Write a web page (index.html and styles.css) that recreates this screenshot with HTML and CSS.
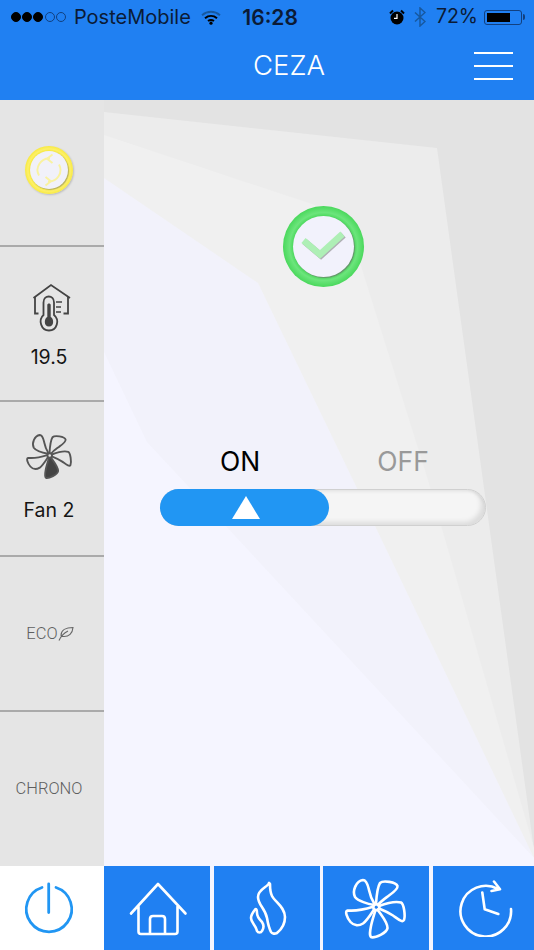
FILE: index.html
```html
<!DOCTYPE html>
<html lang="en">
<head>
<meta charset="utf-8">
<title>CEZA</title>
<link rel="stylesheet" href="styles.css">
</head>
<body>
<svg class="defs" width="0" height="0" aria-hidden="true">
  <symbol id="fan-blades" viewBox="342 876 68 64">
    <path d="M374 905C368 904 358 901 355 897C352 891 356 881 363 880C367 880 368 886 369 890C370 895 372 900 374.500 904"/>
    <path d="M376 904C376.500 896 377.500 887 380 883C383 880 396 882 397.500 886C398 889 394 892 389 895.500C385 898.500 381 901 378 905"/>
    <path d="M379 906C387 903 396 901 401 902.500C404 904 405.500 916 404 920C402.500 923 398 919 393 915.500C389 913 384 910.500 379 908.500"/>
    <path class="blade-four" d="M377.500 909.500C381 915 387.500 922 387.500 928C387 933 375 938 371.500 937.300C369 936 370 931 371 926C372 921 374 915 375.500 910"/>
    <path d="M373 906.800C363 910 353 911 347.500 910.500C344.500 911 347 918 350.500 922C354 926 359 926 363 923.500C367 920.500 371 914 374 909.500"/>
    <circle class="hub" cx="376.300" cy="907.300" r="3"/>
  </symbol>
</svg>
<div class="app">
  <header class="topbar">
    <div class="status">
      <div class="signal">
        <span class="dot on"></span><span class="dot on"></span><span class="dot on"></span><span class="dot"></span><span class="dot"></span>
      </div>
      <span class="carrier">PosteMobile</span>
      <svg class="wifi" viewBox="0 0 20 15" width="20" height="15">
        <path class="wifi-dim" d="M1 5.200C6.300 .6 13.700 .6 19 5.200"/>
        <path class="wifi-on" d="M4 8.300C7.600 5.300 12.400 5.300 16 8.300"/>
        <path class="wifi-on" d="M7 11C8.800 9.700 11.200 9.700 13 11"/>
        <circle class="wifi-dot" cx="10" cy="13.200" r="1.600"/>
      </svg>
      <span class="clock">16:28</span>
      <div class="status-right">
        <svg class="alarm" viewBox="0 0 16 16" width="16" height="16">
          <circle cx="8" cy="9" r="6.500" fill="#000"/>
          <path d="M1 4.500L4 1.500M15 4.500L12 1.500" stroke="#000" stroke-width="2" fill="none"/>
          <path d="M8 5V9.300H5" stroke="#fff" stroke-width="1.200" fill="none"/>
        </svg>
        <svg class="bt" viewBox="0 0 12 20" width="12" height="20">
          <path d="M1 5.500L11 14.500L6 19V1L11 5.500L1 14.500" fill="none" stroke="#17589f" stroke-width="1.500"/>
        </svg>
        <span class="percent">72%</span>
        <div class="battery"><div class="battery-level"></div></div>
      </div>
    </div>
    <div class="nav">
      <h1 class="title">CEZA</h1>
      <div class="burger"><span></span><span></span><span></span></div>
    </div>
  </header>

  <div class="middle">
    <aside class="side">
      <div class="side-item first">
        <div class="sync">
          <div class="sync-face">
            <svg viewBox="0 0 38 38" width="38" height="38">
              <path d="M9 24.500A11.500 11.500 0 0 1 20 7.500M29 13.500A11.500 11.500 0 0 1 18 30.500" fill="none" stroke="#f9f2a0" stroke-width="1.900"/>
              <path d="M22.500 3.500L17 7.700L22.500 12M15.500 26L21 30.300L15.500 34.500" fill="none" stroke="#f9f2a0" stroke-width="1.900"/>
            </svg>
          </div>
        </div>
      </div>
      <div class="side-item temp-item">
        <svg class="thermo" viewBox="27 281 44 51" width="44" height="51">
          <path d="M33.500 297L51 284L70 297" fill="none" stroke="#444" stroke-width="1.800"/>
          <path d="M35 296V312.500H38.500M68 296V312.500H63.500" fill="none" stroke="#444" stroke-width="1.800"/>
          <path d="M43.500 314V301.500C43.500 293.500 54 293.500 54 301.500V314C60 319 57 329.500 49 329.500C41 329.500 38 319 43.500 314Z" fill="#e5e5e5" stroke="#444" stroke-width="1.800"/>
          <path d="M47.300 316V304C47.300 302 50.700 302 50.700 304V316C54 317.500 54.500 325.500 49 325.500C43.500 325.500 44 317.500 47.300 316Z" fill="#444"/>
          <path d="M56 301H62M56 306H61M56 311H61" stroke="#444" stroke-width="1.500"/>
        </svg>
        <span class="side-value temp">19.5</span>
      </div>
      <div class="side-item fan-item">
        <svg class="side-fan" width="51" height="48"><use href="#fan-blades"/></svg>
        <span class="side-value fan-label">Fan 2</span>
      </div>
      <div class="side-item">
        <div class="eco">
          <span class="side-thin">ECO</span>
          <svg viewBox="0 0 16 15" width="16" height="15">
            <path d="M3 9.500C3 4 8 1.500 15 1.500C14.500 7.500 11 11 5 10.500C4 10.500 3 10.500 3 9.500ZM1 14.500C3 10 6 7 10 5" fill="none" stroke="#666" stroke-width="1.100"/>
          </svg>
        </div>
      </div>
      <div class="side-item">
        <span class="side-thin">CHRONO</span>
      </div>
    </aside>

    <main class="panel">
      <svg class="backdrop" viewBox="104 100 430 766" width="430" height="766" aria-hidden="true">
        <path class="bg-a" d="M104 112L437 148L534 850V866H104Z"/>
        <path class="bg-b" d="M104 135L345 215L428 480L534 848V866H104Z"/>
        <path class="bg-c" d="M104 178L258 283L353 480L534 858V866H104Z"/>
        <path class="bg-d" d="M104 352L147 442L187 485L223 523L534 858V866H104Z"/>
      </svg>
      <div class="content">
        <div class="ok">
          <div class="ok-face">
            <svg class="ok-check" viewBox="0 0 61 61" width="61" height="61">
              <path d="M10.500 24.500L27 38.500L49.500 18" fill="none" stroke="#aeefb6" stroke-width="6.500"/>
            </svg>
          </div>
        </div>
        <div class="power-switch">
          <div class="labels">
            <span class="state active">ON</span>
            <span class="state">OFF</span>
          </div>
          <div class="track">
            <div class="fill"><span class="triangle"></span></div>
          </div>
        </div>
      </div>
    </main>
  </div>

  <nav class="tabs">
    <div class="tab tab-power">
      <svg viewBox="19 879 66 58" width="66" height="58">
        <path d="M42 887.500A22.700 22.700 0 1 0 56 887.500M48.700 884V912.500" fill="none" stroke="#2196f3" stroke-width="2.800" stroke-linecap="round"/>
      </svg>
    </div>
    <div class="tab">
      <svg class="tab-icon" viewBox="124 879 66 58" width="66" height="58">
        <path d="M131 913.500L158 884L185.500 913.500M138.500 906.500V931.500Q138.500 934 141 934H175Q177.500 934 177.500 931.500V906.500M150 934V919Q150 916 153 916H162Q165 916 165 919V934"/>
      </svg>
    </div>
    <div class="tab">
      <svg class="tab-icon" viewBox="234 879 66 58" width="66" height="58">
        <path d="M269 883C268 887 258 889 258 897C258 905 265 908 267 918C268 924 269 928 271 932C272 934 275 934 277 933C282 929 285 924 285 917C285 907 275 902 272 896C270 892 270 887 270 884Z"/>
        <path d="M255.500 909C253 912 251 915 251 918C251 923 256 925 257 931C258 933 261 933 262 931C264 928 264 925 262 922C259 919 257 917 257 913C257 911 257 909 255.500 909Z"/>
      </svg>
    </div>
    <div class="tab">
      <svg class="tab-fan" width="68" height="64"><use href="#fan-blades"/></svg>
    </div>
    <div class="tab tab-last">
      <svg class="tab-icon" viewBox="450 879 67 58" width="67" height="58">
        <path d="M498 889A25.300 25.300 0 1 0 511 909M494 881.500L500 889.300L491.500 891M482.300 892.500L484.700 909.300L498.300 914"/>
      </svg>
    </div>
  </nav>
</div>
</body>
</html>
```

FILE: styles.css
```css
* { box-sizing: border-box; }
html, body { margin: 0; padding: 0; }
body { width: 534px; height: 950px; overflow: hidden; font-family: "Inter", "Liberation Sans", sans-serif; background: #fff; }
.defs { position: absolute; }
.app { display: flex; flex-direction: column; width: 534px; height: 950px; }

.topbar { height: 100px; background: #2080f2; flex: none; }
.status { display: flex; align-items: center; height: 34px; padding: 0 10px 0 11px; color: #0b1b36; }
.signal { display: flex; }
.dot { width: 10px; height: 10px; margin-right: 1.200px; border-radius: 50%; border: 1px solid #12407f; }
.dot.on { background: #000; border-color: #000; }
.carrier { font-size: 20px; margin-left: 7px; line-height: 1; }
.wifi { margin-left: 10px; }
.wifi-dim { fill: none; stroke: #17589f; stroke-width: 1.800; }
.wifi-on { fill: none; stroke: #000; stroke-width: 2; }
.wifi-dot { fill: #000; }
.clock { font-size: 21px; font-weight: 600; margin-left: 21.500px; line-height: 1; }
.status-right { display: flex; align-items: center; margin-left: auto; }
.bt { margin-left: 9px; }
.percent { font-size: 19.500px; margin-left: 10px; line-height: 1; }
.battery { position: relative; width: 38px; height: 15px; margin-left: 6px; margin-right: 2px; padding: 2px; border: 1.500px solid #12407f; border-radius: 3px; }
.battery::after { content: ""; position: absolute; right: -4px; top: 3px; width: 2.500px; height: 6px; background: #12407f; border-radius: 0 2px 2px 0; }
.battery-level { width: 72%; height: 100%; background: #000; }

.nav { display: flex; align-items: center; height: 64px; padding-left: 104px; }
.title { flex: 1; margin: 0; text-align: center; color: #fff; font-size: 27.500px; font-weight: 300; line-height: 1; }
.burger { display: flex; flex-direction: column; gap: 11px; width: 60px; padding: 0 21px 0 0; }
.burger span { display: block; width: 39px; height: 2px; background: #fff; }

.middle { display: flex; flex: 1; min-height: 0; }
.side { display: flex; flex-direction: column; width: 104px; flex: none; background: #e5e5e5; }
.side-item { display: flex; flex-direction: column; align-items: center; justify-content: center; height: 155px; padding-right: 6px; border-bottom: 2px solid #aaa; }
.side-item.first { height: 147px; padding-bottom: 6px; }
.side-item:last-child { border-bottom: 0; flex: 1; height: auto; }
.sync { display: flex; align-items: center; justify-content: center; width: 48px; height: 48px; border-radius: 50%; background: radial-gradient(circle, #f6e93c 0, #f6e93c 19px, #fdf06a 21px, #f8ea40 24px); box-shadow: 1px 1px 2px rgba(0,0,0,.18); }
.sync-face { width: 38px; height: 38px; border-radius: 50%; background: #f1f1f9; box-shadow: 1px 1px 1px rgba(120,120,120,.5); }
.sync-face svg { display: block; }
.thermo { display: block; }
.temp-item { padding-top: 4px; }
.side-value { color: #151515; font-size: 19.500px; line-height: 24px; }
.temp { margin-top: 12px; }
.side-fan { display: block; fill: none; stroke: #555; stroke-width: 2.500; --blade-fill: #444; }
.fan-item { padding-bottom: 4px; }
.fan-label { margin-top: 18px; }
.blade-four { fill: var(--blade-fill, none); }
.eco { display: flex; align-items: center; padding-left: 2px; }
.side-thin { color: #5f5f5f; font-family: "Roboto", sans-serif; font-size: 16.500px; font-weight: 300; line-height: 20px; }

.panel { position: relative; flex: 1; min-width: 0; overflow: hidden; background: #e3e3e3; }
.backdrop { position: absolute; left: 0; top: 0; }
.bg-a { fill: #ececec; }
.bg-b { fill: #f0f0f0; }
.bg-c { fill: #f2f2fb; }
.bg-d { fill: #f5f5ff; }
.content { position: relative; padding-top: 106px; }
.ok { display: flex; align-items: center; justify-content: center; width: 81px; height: 81px; margin-left: 178.500px; border-radius: 50%; background: radial-gradient(circle, #4ad85c 0, #4ad85c 30px, #6ce57c 34px, #4ad85c 40.500px); }
.ok-face { width: 61px; height: 61px; border-radius: 50%; background: #f2f2fc; box-shadow: 1px 1px 1px rgba(110,110,110,.65); }
.ok-check { display: block; filter: drop-shadow(1px 1px 0 rgba(120,120,120,.55)); }
.power-switch { width: 326px; margin: 156px 0 0 56px; }
.labels { display: grid; grid-template-columns: 160px 166px; height: 46px; padding-top: 2px; }
.state { color: #999; font-size: 26.500px; line-height: 32px; text-align: center; }
.state.active { color: #000; }
.track { height: 37px; border-radius: 18.500px; background: #f5f5f5; border: 1px solid #d0d0d0; box-shadow: inset -4px -3px 5px rgba(0,0,0,.1), inset 0 2px 3px rgba(0,0,0,.06); }
.fill { display: flex; align-items: center; justify-content: center; width: 168.500px; height: 37px; margin: -1px; padding-left: 4px; border-radius: 18.500px; background: #2196f3; }
.triangle { width: 0; height: 0; border-left: 14px solid transparent; border-right: 14px solid transparent; border-bottom: 23px solid #fff; }

.tabs { display: flex; height: 84px; flex: none; gap: 3.500px; background: #f5f5ff; }
.tab { display: flex; align-items: center; justify-content: center; width: 106px; background: #2080f2; }
.tab svg { display: block; }
.tab-power { width: 104px; margin-right: -3.500px; background: #fff; }
.tab-last { width: auto; flex: 1; }
.tab-icon, .tab-fan { fill: none; stroke: #fff; stroke-width: 2.600; stroke-linecap: round; stroke-linejoin: round; }
```
